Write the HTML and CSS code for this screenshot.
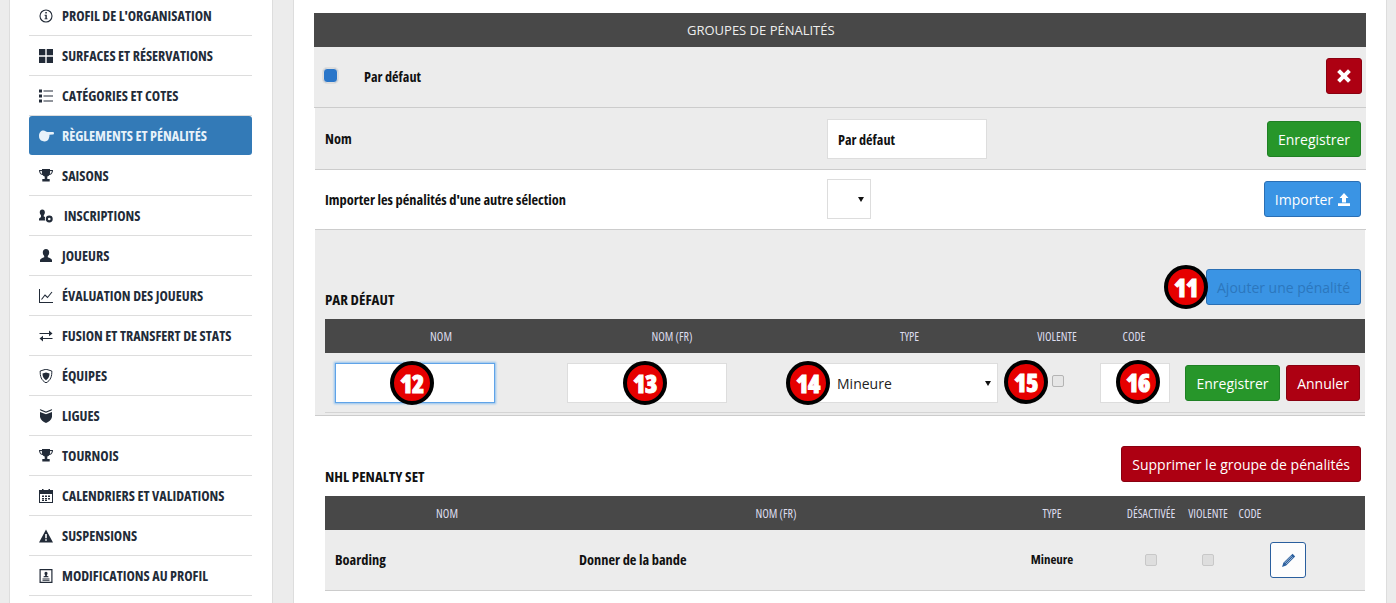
FILE: index.html
```html
<!DOCTYPE html>
<html lang="fr">
<head>
<meta charset="utf-8">
<title>Groupes de pénalités</title>
<link rel="stylesheet" href="styles.css">
</head>
<body>
<div class="page">
  <aside class="side">
    <ul class="menu">
      <li class="item"><svg class="ic" viewBox="0 0 14 14"><circle cx="7" cy="7" r="6" fill="none" stroke="currentColor" stroke-width="1.1"/><rect x="6.3" y="3" width="1.5" height="1.5"/><path d="M5.6 5.8h2.2v3.600h.8v.9H5.500v-.9h.9V6.700h-.8z"/></svg><span>PROFIL DE L'ORGANISATION</span></li>
      <li class="item"><svg class="ic" viewBox="0 0 14 14"><path d="M0 0h6.300v6.300H0zM7.700 0H14v6.300H7.700zM0 7.700h6.300V14H0zM7.700 7.700H14V14H7.700z"/></svg><span>SURFACES ET RÉSERVATIONS</span></li>
      <li class="item"><svg class="ic" viewBox="0 0 14 14"><path d="M0 .5h3v3H0zM0 5.500h3v3H0zM0 10.500h3v3H0zM4.500 1.400H14v1.100H4.500zM4.500 6.400H14v1.100H4.500zM4.500 11.400H14v1.100H4.500z"/></svg><span>CATÉGORIES ET COTES</span></li>
      <li class="item active"><svg class="ic ic-hand" viewBox="0 0 15 14"><path d="M0 7C0 3.500 2 1.500 4.500 1.500c1.700 0 2.500 1.200 4 1.500h5.500c1.300 0 1.300 2.500 0 2.500l-3.500.3c0 2.500-.6 4.500-2 5.700-1.500 1-3.500 1.100-5 .6C1.200 11.400 0 9.800 0 7z"/></svg><span>RÈGLEMENTS ET PÉNALITÉS</span></li>
      <li class="item"><svg class="ic" viewBox="0 0 14 14"><use href="#trophy"/></svg><span>SAISONS</span></li>
      <li class="item"><svg class="ic" viewBox="0 0 15 14"><path d="M3.500 0C5.300 0 6.300 1.200 6.300 3c0 1.300-.5 2.400-1.200 3.200v1.400c.5.200 1 .4 1.500.6-.3.700-.4 1.500-.3 2.300.1.500.3 1 .6 1.400H0v-1.600c0-1 1.100-1.500 2.100-1.900V6.200C1.300 5.400.8 4.300.8 3 .8 1.200 1.800 0 3.500 0z"/><path fill-rule="evenodd" d="M11 6.500a3.700 3.700 0 1 1 0 7.400 3.700 3.700 0 0 1 0-7.400zm0 2.300a1.400 1.400 0 1 0 0 2.800 1.400 1.400 0 0 0 0-2.800z"/></svg><span class="shift">INSCRIPTIONS</span></li>
      <li class="item"><svg class="ic" viewBox="0 0 14 14"><path d="M7 0c2 0 3.200 1.500 3.200 3.500 0 1.400-.6 2.700-1.400 3.500v1.300c1.700.7 4.200 1.300 4.200 3V13H1v-1.700c0-1.700 2.500-2.300 4.200-3V7C4.400 6.200 3.800 4.900 3.800 3.500 3.800 1.500 5 0 7 0z"/></svg><span>JOUEURS</span></li>
      <li class="item"><svg class="ic" viewBox="0 0 14 14"><path d="M0 0h1v13h13v1H0z"/><path d="M2.500 10.500 6 6l2.500 2.500L13 3" fill="none" stroke="currentColor" stroke-width="1.100"/></svg><span>ÉVALUATION DES JOUEURS</span></li>
      <li class="item"><svg class="ic" viewBox="0 0 14 14"><path d="M10 1.500 13.500 4.400 10 7.200V5H.5V3.900H10zM4 6.800v2.200h9.500v1.100H4v2.300L.5 9.600z"/></svg><span>FUSION ET TRANSFERT DE STATS</span></li>
      <li class="item"><svg class="ic" viewBox="0 0 14 14"><path d="M7 .2 12.800 2c.2 5-1 9.500-5.800 11.800C2.200 11.500 1 7 1.200 2z" fill="none" stroke="currentColor" stroke-width="1"/><path d="M7 3.500 10.500 4.600c0 3-.8 5-3.500 6.700C4.300 9.600 3.500 7.600 3.500 4.600z"/></svg><span>ÉQUIPES</span></li>
      <li class="item"><svg class="ic" viewBox="0 0 14 14"><path d="M.8 0 7 2.500 13.200 0l-.6 1.600L7 3.800 1.400 1.600zM1 3 7 5.200 13 3v5c-.6 3-3.300 5-6 6-2.700-1-5.400-3-6-6z"/></svg><span>LIGUES</span></li>
      <li class="item"><svg class="ic" viewBox="0 0 14 14"><use href="#trophy"/></svg><span>TOURNOIS</span></li>
      <li class="item"><svg class="ic" viewBox="0 0 14 14"><path fill-rule="evenodd" d="M0 1h3V0h1.500v1h5V0H11v1h3v13H0zm1 4v8h12V5z"/><path d="M3 6.500h2v1.500H3zM6 6.500h2v1.500H6zM9 6.500h2v1.500H9zM3 9h2v1.500H3zM6 9h2v1.500H6zM9 9h2v1.500H9zM3 11h2v1H3zM6 11h2v1H6z"/></svg><span>CALENDRIERS ET VALIDATIONS</span></li>
      <li class="item"><svg class="ic" viewBox="0 0 14 14"><path fill-rule="evenodd" d="M7 .5 14 13.500H0zM6.200 5v4.300h1.600V5zm0 5.200v1.600h1.600v-1.600z"/></svg><span>SUSPENSIONS</span></li>
      <li class="item"><svg class="ic" viewBox="0 0 14 14"><path fill-rule="evenodd" d="M.5 0h13v14H.5zm1.200 1.200v11.600h10.600V1.200z"/><path d="M7 2.800c1 0 1.500.8 1.500 1.700 0 .7-.3 1.200-.7 1.600v.6l1.700.9v.7h-5v-.7l1.700-.9v-.6c-.4-.4-.7-.9-.7-1.600 0-.9.5-1.700 1.500-1.700zM3.500 9.600h7v.8h-7zM3.500 11h7v.8h-7z"/></svg><span>MODIFICATIONS AU PROFIL</span></li>
    </ul>
    <svg class="defs" width="0" height="0"><symbol id="trophy" viewBox="0 0 14 14"><path d="M3 0h8v1h3c0 2.700-1 4.500-3.600 5-.5.800-1.200 1.300-2.100 1.500V10h2.400v2.500H3.300V10h2.400V7.500C4.800 7.300 4.100 6.800 3.600 6 1 5.500 0 3.700 0 1h3zM1.200 2c.1 1.500.7 2.500 1.900 3L2.800 2zM12.800 2h-1.600l-.3 3c1.200-.5 1.800-1.500 1.900-3z"/></symbol></svg>
  </aside>

  <main class="main">
    <h2 class="banner"><span>GROUPES DE PÉNALITÉS</span></h2>

    <div class="row row-head">
      <span class="radio"></span>
      <strong class="cond head-name">Par défaut</strong>
      <button class="btn red square" type="button"><svg viewBox="0 0 14 14" width="16" height="16"><path d="M1 3.500 3.500 1 7 4.500 10.500 1 13 3.500 9.500 7 13 10.500 10.500 13 7 9.500 3.500 13 1 10.500 4.500 7 1 3.500z" fill="#fff"/></svg></button>
    </div>

    <div class="row row-form row-name gray">
      <strong class="cond label">Nom</strong>
      <div class="field cond">Par défaut</div>
      <button class="btn green" type="button">Enregistrer</button>
    </div>

    <div class="row row-form row-import white">
      <strong class="cond label">Importer les pénalités d'une autre sélection</strong>
      <div class="field tiny"><i class="caret"></i></div>
      <button class="btn blue" type="button">Importer <svg class="up" viewBox="0 0 12 13" width="12" height="13"><path d="M6 0 10.500 5H8V9.500H4V5H1.500zM0 10.300h12V13H0z" fill="#fff"/></svg></button>
    </div>

    <section class="set">
      <div class="set-title">
        <h3 class="cond">PAR DÉFAUT</h3>
        <div class="with-badge">
          <b class="badge b11">11</b>
          <button class="btn blue faded" type="button">Ajouter une pénalité</button>
        </div>
      </div>

      <div class="grid grid-a thead cond">
        <span>NOM</span><span>NOM (FR)</span><span>TYPE</span><span>VIOLENTE</span><span>CODE</span><span></span>
      </div>
      <div class="grid grid-a edit">
        <div class="cell"><div class="input focus wide"></div><b class="badge b12">12</b></div>
        <div class="cell"><div class="input wide"></div><b class="badge b13">13</b></div>
        <div class="cell"><div class="input select">Mineure<i class="caret"></i></div><b class="badge b14">14</b></div>
        <div class="cell"><span class="check c15"></span><b class="badge b15">15</b></div>
        <div class="cell"><div class="input code"></div><b class="badge b16">16</b></div>
        <div class="actions">
          <button class="btn green" type="button">Enregistrer</button>
          <button class="btn red" type="button">Annuler</button>
        </div>
      </div>
    </section>

    <section class="set2">
      <div class="set-title2">
        <h3 class="cond">NHL PENALTY SET</h3>
        <button class="btn red" type="button">Supprimer le groupe de pénalités</button>
      </div>
      <div class="grid grid-b thead cond">
        <span>NOM</span><span>NOM (FR)</span><span>TYPE</span><span>DÉSACTIVÉE</span><span>VIOLENTE</span><span>CODE</span><span></span>
      </div>
      <div class="grid grid-b data gray cond">
        <strong class="t-name">Boarding</strong>
        <strong class="t-fr">Donner de la bande</strong>
        <strong class="t-type">Mineure</strong>
        <span class="mid"><span class="check off"></span></span>
        <span class="mid"><span class="check off"></span></span>
        <span></span>
        <button class="btn edit-btn" type="button"><svg viewBox="0 0 14 14" width="15" height="15"><path d="M10.800.8 13.200 3.200 4.800 11.600 1 13l1.200-3.800z" fill="#2a5f9e"/><path d="M3.400 9.400 10 2.800M4.600 10.400l6.500-6.500" stroke="#fff" stroke-width=".5"/></svg></button>
      </div>
      <div class="grid grid-b data next">
        <span></span><span></span><span></span><span></span><span></span><span></span>
        <button class="btn edit-btn" type="button"></button>
      </div>
    </section>
  </main>
</div>
</body>
</html>
```

FILE: styles.css
```css
* { box-sizing: border-box; }
html, body { margin: 0; height: 100%; overflow: hidden; }
body { background: #ececec; color: #111; font-family: "Open Sans", "Liberation Sans", sans-serif; font-size: 14px; }
.page { display: flex; height: 603px; padding-left: 9px; align-items: flex-start; }
.cond, .item span { font-family: "Open Sans", "Liberation Sans Narrow", sans-serif; font-stretch: 75%; }

.side { width: 264px; height: 603px; background: #fff; border: 1px solid #ddd; border-width: 0 1px; padding: 0 20px 0 19px; flex: none; overflow: hidden; }
.menu { list-style: none; margin: -4px 0 0; padding: 0; }
.item { display: flex; align-items: center; height: 40px; border-bottom: 1px solid #ddd; padding-left: 10px; color: #222b38; }
.item span { margin-left: 9px; font-weight: 700; font-size: 14.100px; }
.item span.shift { margin-left: 11px; }
.item.active { background: #337ab7; color: #e8f2fa; border-radius: 3px; border-bottom: 0; height: 39px; margin-bottom: 1px; }
.ic { width: 14px; height: 14px; fill: currentColor; flex: none; }
.ic-hand { width: 15px; margin-right: -1px; }
.defs { position: absolute; }

.main { width: 1094px; margin-left: 20px; height: 603px; background: #fff; border-left: 1px solid #ddd; border-right: 1px solid #ddd; padding: 13px 20px 0; flex: none; overflow: hidden; }
.banner { margin: 0; height: 34px; background: #484848; color: #eee; font-size: 13px; font-weight: 400; display: flex; align-items: center; padding-left: 373px; }

.row { display: flex; align-items: center; border-bottom: 1px solid #ccc; }
.row-head { height: 61px; background: #ececec; padding: 0 4px 2px 9px; }
.radio { width: 15px; height: 15px; border-radius: 4px; background: #2a76c9; border: 1px solid #ddd; box-shadow: 0 0 0 1px #ddd; margin-top: -2px; }
.head-name { margin-left: 26px; font-weight: 700; font-size: 14.200px; flex: 1; }
.row-form { padding-left: 10px; padding-right: 5px; margin-left: 1px; }
.row-name { height: 62px; padding-top: 1px; }
.row-name .label { margin-top: -2px; }
.row-import { height: 60px; padding-bottom: 1px; }
.row-form .label { width: 502px; font-size: 14.400px; flex: none; }
.gray { background: #ececec; }
.white { background: #fff; }
.field { width: 160px; height: 40px; background: #fff; border: 1px solid #ddd; display: flex; align-items: center; padding-left: 10px; font-weight: 700; font-size: 14.200px; position: relative; }
.field.tiny { width: 44px; }
.row-form .btn { margin-left: auto; }

.btn { height: 36px; border-radius: 3px; border: 1px solid transparent; color: #fff; font-family: inherit; font-size: 14px; padding: 0 10px; display: inline-flex; align-items: center; justify-content: center; white-space: nowrap; }
.btn.square { width: 36px; padding: 0; }
.red { background: #ad0012; border-color: #8a0010; }
.green { background: #27962a; border-color: #1f8024; }
.blue { background: #3a94e4; border-color: #2a6fb4; }
.faded { color: #2c77bd; }
.up { margin-left: 5px; }
.caret { position: absolute; right: 6px; top: 50%; margin-top: -2px; border: 3.500px solid transparent; border-top: 5px solid #111; border-bottom: 0; }

.set { background: #ececec; height: 186px; margin: 0 1px; padding: 39px 0 0 10px; border-bottom: 1px solid #ccc; position: relative; }
.set-title { display: flex; justify-content: space-between; align-items: flex-start; height: 36px; padding-right: 4px; }
.set-title h3, .set-title2 h3 { margin: 0; font-size: 15px; font-weight: 700; color: #111; }
.set-title h3 { line-height: 22px; margin-top: 19px; }
.with-badge { position: relative; }
.grid { display: grid; align-items: center; }
.grid-a { grid-template-columns: 232px 230px 245px 50px 104px 1fr; }
.grid-b { grid-template-columns: 244px 414px 138px 60px 54px 30px 1fr; }
.thead { height: 34px; background: #484848; color: #dde; font-size: 12px; text-align: center; margin-top: 14px; }
.edit { margin-top: 0; height: 60px; border-bottom: 1px solid #d4d4d4; padding-bottom: 1px; align-items: start; padding-top: 10px; }
.cell { position: relative; padding-left: 10px; }
.input { height: 40px; background: #fff; border: 1px solid #ddd; position: relative; }
.input.wide { width: 160px; }
.input.focus { border-color: #5fa3e8; box-shadow: 0 0 2px 1px #8fc0ee; }
.input.select { width: 201px; display: flex; align-items: center; padding-left: 39px; color: #222; }
.input.code { width: 70px; margin-left: 8px; }
.check { display: block; width: 12px; height: 12px; background: #e6e6e6; border: 1px solid #b4b4b4; border-radius: 2px; }
.c15 { margin: 12px 0 0 10px; }
.off { background: #dedede; border-color: #c8c8c8; }
.actions { display: flex; gap: 6px; margin: 2px 0 0 -1px; }
.actions .btn:first-child { width: 95px; }
.actions .btn:last-child { width: 74px; }
.actions .btn { padding: 0; }

.badge { position: absolute; width: 44px; height: 44px; border-radius: 50%; background: #e60000; border: 4px solid #000; color: #fff; font-family: "Open Sans", sans-serif; font-stretch: 75%; font-weight: 800; font-size: 25px; letter-spacing: -.5px; -webkit-text-stroke: 1px #fff; display: flex; align-items: center; justify-content: center; z-index: 2; }
.b11 { left: -42px; top: -4px; }
.b12 { left: 65px; top: -2px; }
.b13 { left: 66px; top: -2px; }
.b14 { left: -1px; top: -2px; }
.b15 { left: -28px; top: -3px; }
.b16 { left: 34px; top: -3px; }

.set2 { padding: 30px 1px 0 11px; }
.set-title2 { display: flex; justify-content: space-between; align-items: center; height: 36px; padding-right: 4px; }
.set-title2 h3 { margin-top: 24px; }
.data { height: 61px; border-bottom: 1px solid #ccc; text-align: left; font-size: 14.400px; }
.data strong { margin-top: -2px; }
.next { height: 59px; border: 0; }
.t-name { padding-left: 10px; }
.t-fr { margin-left: 10px; }
.t-type { text-align: center; font-size: 13px; }
.mid { display: flex; justify-content: center; }
.edit-btn { width: 36px; height: 36px; background: #fdfdfd; border: 1px solid #2a5f9e; padding: 0; margin-left: 5px; }
```
